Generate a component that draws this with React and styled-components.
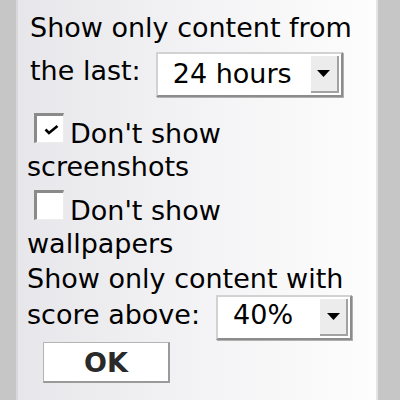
import React from "react";
import styled, { createGlobalStyle } from "styled-components";

const GlobalStyle = createGlobalStyle`
  html, body { margin: 0; padding: 0; }
  body {
    font-family: "DejaVu Sans", "Liberation Sans", sans-serif;
    background: #c6c6c6;
  }
`;

const Page = styled.div`
  display: flex;
  height: 400px;
  box-sizing: border-box;
  padding: 0 22px 0 16px;
  background: #c6c6c6;
`;

const Panel = styled.div`
  flex: 1;
  box-sizing: border-box;
  border-left: 2px solid #d9d9d9;
  border-right: 2px solid #e4e4e4;
  background: linear-gradient(90deg, #e7e7eb 0%, #f3f3f5 50%, #fdfdfd 100%);
  padding: 11px 0 0 9px;
  font-size: 27px;
  line-height: 33px;
  color: #000;
`;

const Section = styled.div`
  margin-left: ${(p) => p.$indent || 0}px;
  margin-top: ${(p) => p.$mt || 0}px;
`;

const Line = styled.div`
  white-space: nowrap;
`;

const FieldRow = styled.div`
  display: flex;
  align-items: flex-start;
  gap: ${(p) => p.$gap}px;
  margin-top: ${(p) => p.$mt}px;
  white-space: nowrap;
`;

const Label = styled.span`
  margin-top: ${(p) => p.$offset}px;
`;

const SelectBox = styled.div`
  display: flex;
  box-sizing: border-box;
  width: ${(p) => p.$w}px;
  height: 45px;
  background: #fff;
  border-top: 2px solid #d2d2d2;
  border-left: 2px solid #d2d2d2;
  border-right: 2px solid #8c8c8c;
  border-bottom: 2px solid #8c8c8c;
  box-shadow: 1px 1px 0 #b0b0b0;
`;

const SelectValue = styled.span`
  flex: 1;
  padding: ${(p) => p.$pt}px 0 0 15px;
`;

const SelectButton = styled.span`
  display: flex;
  align-items: center;
  justify-content: center;
  width: 28px;
  margin: 2px 2px 2px 0;
  box-sizing: border-box;
  background: #ececec;
  border-right: 2px solid #a2a2a2;
  border-bottom: 2px solid #a2a2a2;
`;

const CheckPara = styled.div`
  margin-top: ${(p) => p.$mt}px;
`;

const CheckBox = styled.span`
  display: inline-block;
  vertical-align: baseline;
  box-sizing: border-box;
  width: 30px;
  height: 30px;
  margin: ${(p) => p.$mt}px 6px 0 7px;
  background: #fff;
  border-top: 3px solid #8a8a8a;
  border-left: 3px solid #8a8a8a;
  border-right: 1px solid #ececec;
  border-bottom: 1px solid #ececec;
  position: relative;
`;

const CheckMark = styled.svg`
  position: absolute;
  left: 7px;
  top: 9px;
`;

const OkButton = styled.button`
  display: block;
  box-sizing: border-box;
  width: 127px;
  height: 41px;
  margin: 2px 0 0 16px;
  padding: 0;
  background: #fff;
  border: 1px solid #b4b4b4;
  border-right: 2px solid #9a9a9a;
  border-bottom: 2px solid #9a9a9a;
  font-family: "DejaVu Sans", sans-serif;
  font-weight: bold;
  font-size: 27px;
  line-height: 33px;
  color: #2a2a2a;
`;

const Arrow = () => (
  <svg width="13" height="7" viewBox="0 0 13 7">
    <polygon points="0,0 13,0 6.5,7" fill="#000" />
  </svg>
);

const Select = ({ w, pt, value }) => (
  <SelectBox $w={w}>
    <SelectValue $pt={pt}>{value}</SelectValue>
    <SelectButton>
      <Arrow />
    </SelectButton>
  </SelectBox>
);

const Check = ({ checked, mt }) => (
  <CheckBox $mt={mt}>
    {checked && (
      <CheckMark width="15" height="10" viewBox="0 0 15 10">
        <polyline
          points="1.5,4.5 5,8 13.5,1"
          fill="none"
          stroke="#000"
          strokeWidth="2.6"
        />
      </CheckMark>
    )}
  </CheckBox>
);

export default function App() {
  return (
    <>
      <GlobalStyle />
      <Page>
        <Panel>
          <Section $indent={3}>
            <Line>Show only content from</Line>
            <FieldRow $gap={15} $mt={8}>
              <Label $offset={2}>the last:</Label>
              <Select w={187} pt={3} value="24 hours" />
            </FieldRow>
          </Section>
          <CheckPara $mt={13}>
            <Check checked mt={3} />
            Don't show
            <br />
            screenshots
          </CheckPara>
          <CheckPara $mt={4}>
            <Check mt={3} />
            Don't show
            <br />
            wallpapers
          </CheckPara>
          <Section $mt={2}>
            <Line>Show only content with</Line>
            <FieldRow $gap={16} $mt={0}>
              <Label $offset={3}>score above:</Label>
              <Select w={136} pt={1} value="40%" />
            </FieldRow>
          </Section>
          <OkButton>OK</OkButton>
        </Panel>
      </Page>
    </>
  );
}
